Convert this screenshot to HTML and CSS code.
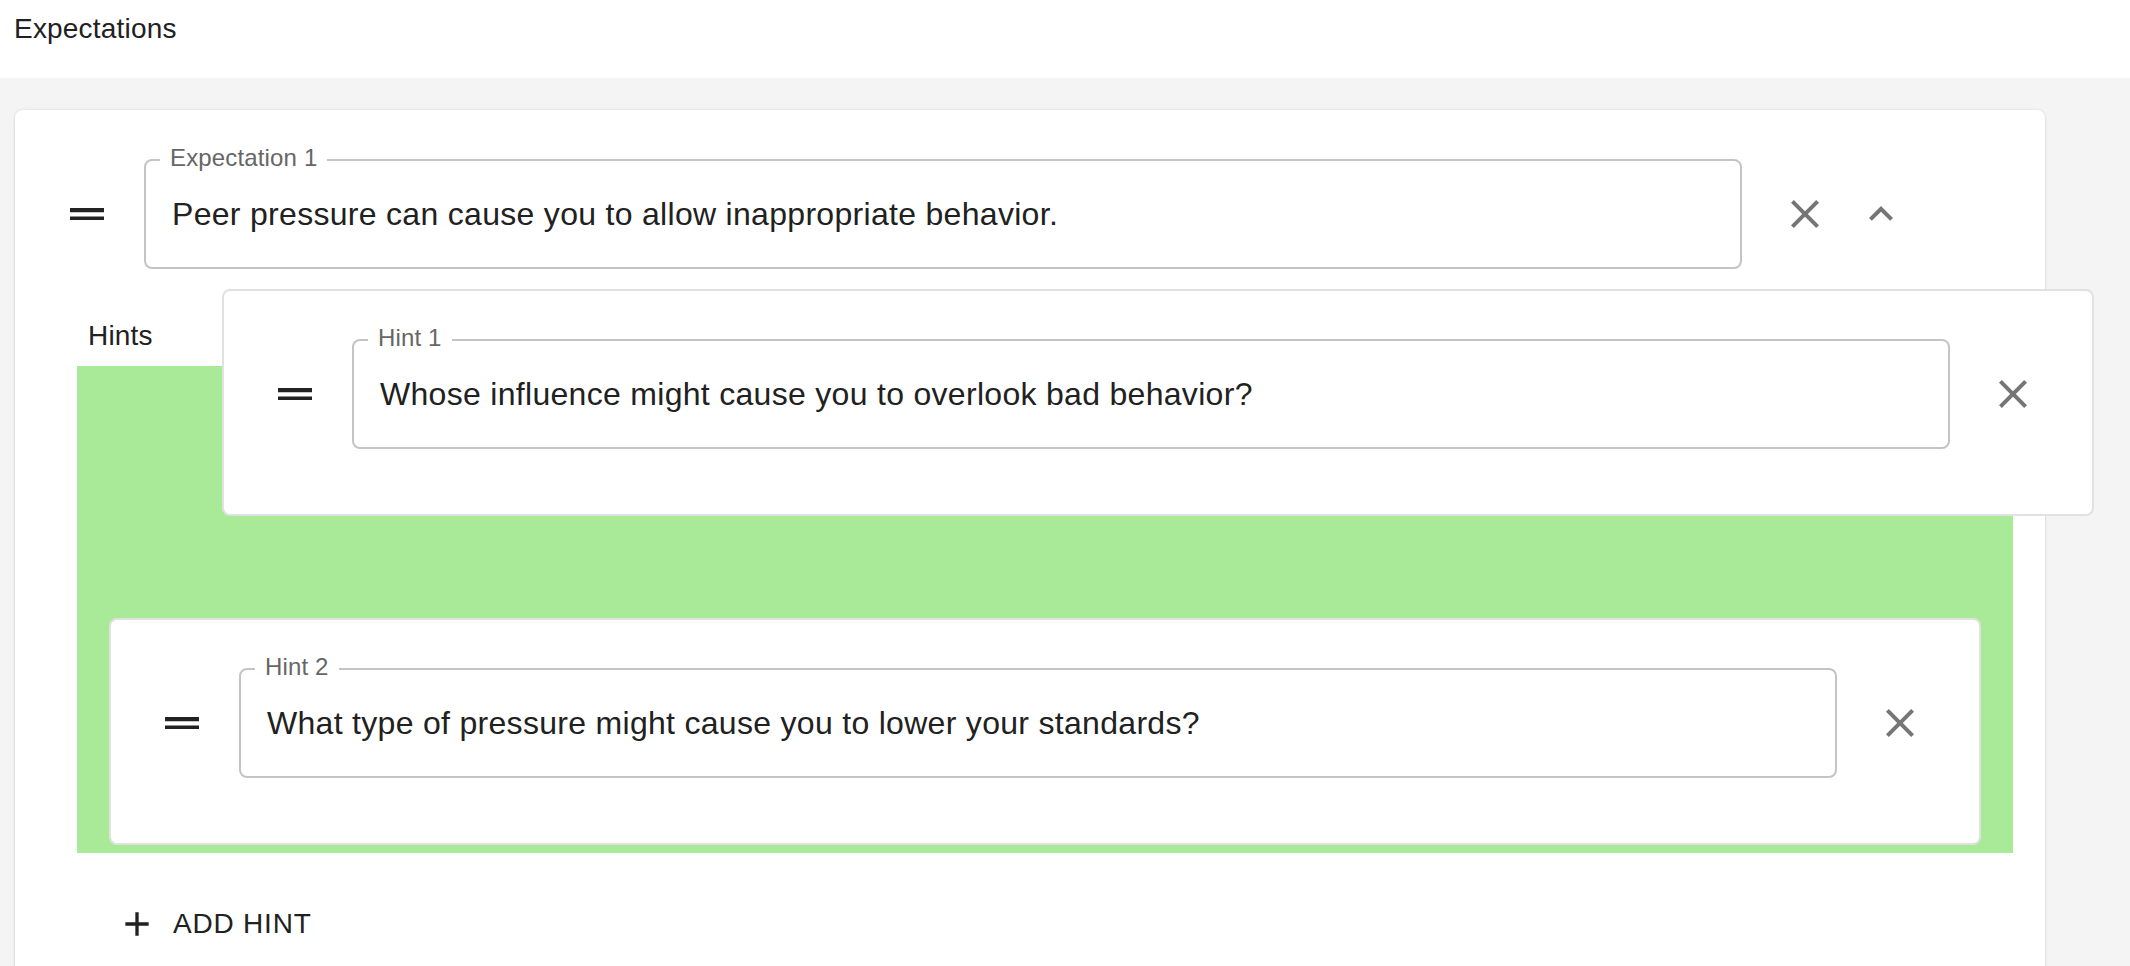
FILE: index.html
```html
<!DOCTYPE html>
<html lang="en">
<head>
<meta charset="utf-8">
<title>Expectations</title>
<link rel="stylesheet" href="styles.css">
</head>
<body>
<header class="topbar"><span class="title">Expectations</span></header>
<main class="page">
  <section class="card">
    <div class="row expectation-row">
      <span class="handle"><svg viewBox="4 9 16 6" width="34" height="12.75"><path d="M20 9H4v2h16V9zM4 15h16v-2H4v2z"/></svg></span>
      <div class="field">
        <span class="field-label">Expectation 1</span>
        <div class="field-value">Peer pressure can cause you to allow inappropriate behavior.</div>
      </div>
      <button type="button" class="icon-btn close-btn" aria-label="Remove"><svg viewBox="0 0 24 24"><path d="M19 6.41 17.59 5 12 10.59 6.41 5 5 6.41 10.59 12 5 17.59 6.41 19 12 13.41 17.59 19 19 17.59 13.41 12z"/></svg></button>
      <button type="button" class="icon-btn collapse-btn" aria-label="Collapse"><svg viewBox="0 0 24 24"><path d="m12 8-6 6 1.41 1.41L12 10.83l4.59 4.58L18 14z"/></svg></button>
    </div>

    <div class="hints-label">Hints</div>
    <div class="droppable">
      <div class="hint-card">
        <div class="row">
          <span class="handle"><svg viewBox="4 9 16 6" width="34" height="12.75"><path d="M20 9H4v2h16V9zM4 15h16v-2H4v2z"/></svg></span>
          <div class="field">
            <span class="field-label">Hint 2</span>
            <div class="field-value">What type of pressure might cause you to lower your standards?</div>
          </div>
          <button type="button" class="icon-btn close-btn" aria-label="Remove hint"><svg viewBox="0 0 24 24"><path d="M19 6.41 17.59 5 12 10.59 6.41 5 5 6.41 10.59 12 5 17.59 6.41 19 12 13.41 17.59 19 19 17.59 13.41 12z"/></svg></button>
        </div>
      </div>
    </div>

    <button type="button" class="add-hint"><svg viewBox="0 0 24 24"><path d="M19 13h-6v6h-2v-6H5v-2h6V5h2v6h6v2z"/></svg><span>Add Hint</span></button>
  </section>

  <div class="hint-card dragging">
    <div class="row">
      <span class="handle"><svg viewBox="4 9 16 6" width="34" height="12.75"><path d="M20 9H4v2h16V9zM4 15h16v-2H4v2z"/></svg></span>
      <div class="field">
        <span class="field-label">Hint 1</span>
        <div class="field-value">Whose influence might cause you to overlook bad behavior?</div>
      </div>
      <button type="button" class="icon-btn close-btn" aria-label="Remove hint"><svg viewBox="0 0 24 24"><path d="M19 6.41 17.59 5 12 10.59 6.41 5 5 6.41 10.59 12 5 17.59 6.41 19 12 13.41 17.59 19 19 17.59 13.41 12z"/></svg></button>
    </div>
  </div>
</main>
</body>
</html>
```

FILE: styles.css
```css
* { box-sizing: border-box; }

html, body {
  margin: 0;
  padding: 0;
  overflow: hidden;
}

body {
  width: 2130px;
  height: 966px;
  font-family: "Liberation Sans", Arial, Helvetica, sans-serif;
  color: #212121;
  background: #f4f4f4;
}

.topbar {
  height: 78px;
  background: #fff;
  padding: 13px 0 0 14px;
}

.title {
  display: block;
  font-size: 28px;
  line-height: 32px;
  letter-spacing: 0.2px;
}

.page {
  position: relative;
  padding: 32px 0 0 15px;
}

.card {
  width: 2030px;
  background: #fff;
  border-radius: 8px;
  box-shadow: 0 0 3px rgba(0, 0, 0, 0.12), 0 2px 3px rgba(0, 0, 0, 0.08);
  padding: 49px 0 60px 0;
}

.row {
  display: flex;
  align-items: center;
}

.expectation-row {
  padding-left: 55px;
  padding-right: 127px;
}

.handle {
  flex: none;
  display: flex;
  width: 34px;
  margin-right: 40px;
}

.handle svg { fill: #222; display: block; }

.field {
  position: relative;
  flex: 0 0 1598px;
  height: 110px;
  border: 2px solid #c4c4c4;
  border-radius: 8px;
  padding: 30px 26px 0;
}

.field-label {
  position: absolute;
  left: 14px;
  top: -15px;
  padding: 0 10px;
  background: #fff;
  font-size: 24px;
  line-height: 24px;
  letter-spacing: 0.15px;
  color: #666;
  white-space: nowrap;
}

.field-value {
  font-size: 32px;
  line-height: 46px;
  letter-spacing: 0.3px;
  white-space: nowrap;
}

.icon-btn {
  flex: none;
  width: 80px;
  height: 80px;
  display: flex;
  align-items: center;
  justify-content: center;
  padding: 0;
  border: 0;
  background: none;
}

.icon-btn svg {
  width: 48px;
  height: 48px;
  fill: #757575;
}

.close-btn { margin-left: 23px; }
.collapse-btn { width: 72px; }

.hints-label {
  margin: 47px 0 10px 73px;
  font-size: 28px;
  line-height: 40px;
  letter-spacing: 0.2px;
}

.droppable {
  margin-left: 62px;
  width: 1936px;
  background: #a8ea98;
  padding: 252px 32px 8px;
}

.hint-card {
  width: 1872px;
  height: 227px;
  background: #fff;
  border: 2px solid #e1e1e1;
  border-radius: 8px;
  padding: 48px 39px 0 54px;
}

.hint-card.dragging {
  position: absolute;
  left: 222px;
  top: 211px;
}

.add-hint {
  display: flex;
  align-items: center;
  height: 49px;
  margin: 46px 0 0 102px;
  padding: 0;
  border: 0;
  background: none;
  font-family: inherit;
  font-size: 28px;
  letter-spacing: 0.8px;
  text-transform: uppercase;
  color: #212121;
}

.add-hint svg {
  width: 40px;
  height: 40px;
  margin-right: 16px;
  fill: #212121;
}
```
